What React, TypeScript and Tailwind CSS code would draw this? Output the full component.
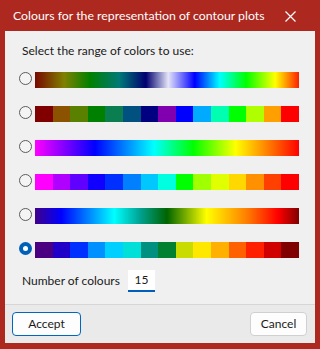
import React from "react";

const font = { fontFamily: 'Lato, "Noto Sans", sans-serif' };

type Bar = { kind: "grad"; css: string } | { kind: "disc"; colors: string[] };

const bars: Bar[] = [
  {
    kind: "grad",
    css: "linear-gradient(to right, #780800 0%, #808000 11%, #008000 21%, #007878 32%, #000070 42%, #e4e4f8 50.5%, #0000ff 60.5%, #00ffff 70%, #00ff00 80%, #ffff00 91%, #ff2000 100%)",
  },
  {
    kind: "disc",
    colors: ["#800000", "#8b5200", "#5a8000", "#008000", "#0a7e50", "#005080", "#000080", "#8000b0", "#0000ff", "#00aaff", "#00ffb0", "#00ff00", "#b0ff00", "#ffa000", "#ff0000"],
  },
  {
    kind: "grad",
    css: "linear-gradient(to right, #ff00ff 0%, #0000ff 22.7%, #00ffff 45%, #00ff00 60%, #ffff00 76%, #ff0000 100%)",
  },
  {
    kind: "disc",
    colors: ["#ff00ff", "#b000ff", "#6000ff", "#1000ff", "#0030ff", "#0080ff", "#00c8ff", "#00ffe0", "#00ff00", "#a0ff00", "#e0ff00", "#ffd800", "#ff9000", "#ff4000", "#ff0000"],
  },
  {
    kind: "grad",
    css: "linear-gradient(to right, #40008a 0%, #0000ff 10%, #00ffff 30%, #00a090 40%, #006400 50%, #ffff00 65%, #ff8000 80%, #ff0000 92%, #800000 100%)",
  },
  {
    kind: "disc",
    colors: ["#4b0082", "#2000c8", "#0030ff", "#0090ff", "#00d0ff", "#00e0d8", "#009080", "#008030", "#c8dc00", "#ffe800", "#ffb000", "#ff6000", "#ff2000", "#d00000", "#800000"],
  },
];

function Radio({ checked }: { checked: boolean }) {
  if (checked) {
    return (
      <div className="w-[13px] h-[13px] rounded-full bg-[#005fb8] flex items-center justify-center shrink-0">
        <div className="w-[5px] h-[5px] rounded-full bg-white" />
      </div>
    );
  }
  return <div className="w-[13px] h-[13px] rounded-full border border-[#5c5c5c] bg-[#f4f4f4] shrink-0" />;
}

export default function App() {
  return (
    <div className="w-[320px] h-[349px] bg-[#ad281e] flex flex-col" style={font}>
      <div className="h-[31px] flex items-center justify-between pl-[13px] pr-[24px] text-white text-[12.3px] whitespace-nowrap">
        <span className="mt-[1px]">Colours for the representation of contour plots</span>
        <svg width="11" height="11" viewBox="0 0 11 11" className="mt-[1px] shrink-0">
          <path d="M0.5 0.5 L10.5 10.5 M10.5 0.5 L0.5 10.5" stroke="white" strokeWidth="1.2" />
        </svg>
      </div>
      <div className="mx-[5px] mb-[6px] flex-1 bg-[#f0f0f0] flex flex-col">
        <div className="flex-1 flex flex-col">
          <div className="pl-[17px] pt-[10px] h-[41px] text-[12px] text-[#1a1a1a] leading-[20px] whitespace-nowrap">
            Select the range of colors to use:
          </div>
          <div className="flex flex-col gap-[18px] pl-[14px]">
            {bars.map((b, i) => (
              <div key={i} className="flex items-start gap-[3px]">
                <Radio checked={i === 5} />
                {b.kind === "grad" ? (
                  <div className="w-[264px] h-[16px]" style={{ background: b.css }} />
                ) : (
                  <div className="w-[264px] h-[16px] flex">
                    {b.colors.map((c, j) => (
                      <div key={j} className="flex-1 h-full" style={{ background: c }} />
                    ))}
                  </div>
                )}
              </div>
            ))}
          </div>
          <div className="flex items-center mt-[12px] pl-[17px] h-[22px]">
            <span className="text-[12px] text-[#1a1a1a] w-[106px] whitespace-nowrap">Number of colours</span>
            <div className="w-[27px] h-[22px] bg-white border-b-2 border-[#005fb8] flex items-center justify-center text-[12px] text-[#1a1a1a]">
              15
            </div>
          </div>
        </div>
        <div className="h-[39px] border-t border-[#d6d6d6] bg-[#eaeaea] flex items-start justify-between pt-[7px] pl-[7px] pr-[8px]">
          <button className="w-[69px] h-[24px] rounded-[4px] border border-[#0067c0] bg-[#fdfdfd] text-[12px] text-[#1a1a1a] flex items-center justify-center">
            Accept
          </button>
          <button className="w-[57px] h-[24px] rounded-[4px] border border-[#d0d0d0] bg-[#fdfdfd] text-[12px] text-[#1a1a1a] flex items-center justify-center">
            Cancel
          </button>
        </div>
      </div>
    </div>
  );
}
